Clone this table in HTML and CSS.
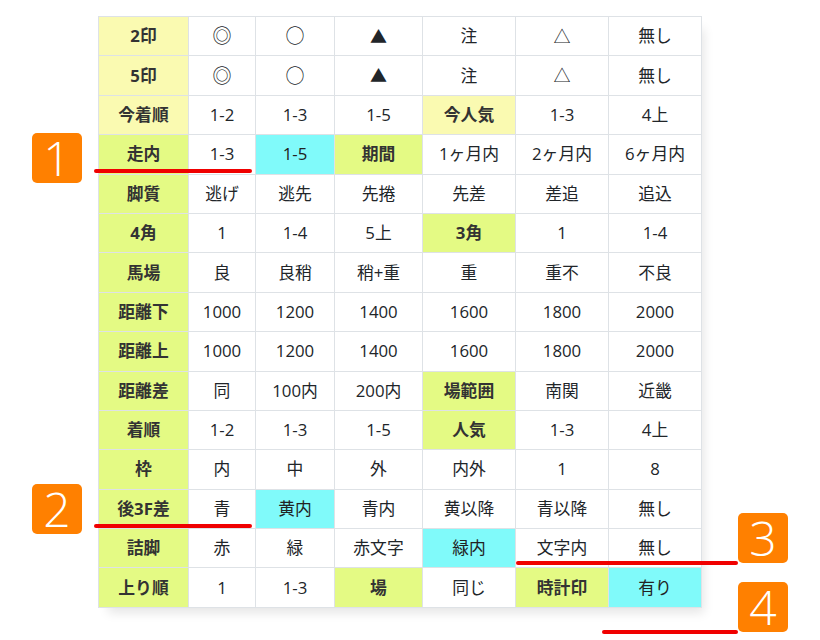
FILE: index.html
```html
<!DOCTYPE html>
<html lang="ja">
<head>
<meta charset="utf-8">
<link rel="stylesheet" href="styles.css">
</head>
<body>
<div class="page">
  <div class="wrap">
    <table class="grid">
      <colgroup>
        <col class="c0"><col class="c1"><col class="c2"><col class="c3"><col class="c4"><col class="c5"><col class="c6">
      </colgroup>
      <tr><th class="y">2印</th><td><span class="sym">◎</span></td><td><span class="sym">○</span></td><td><span class="tri">▲</span></td><td>注</td><td><span class="tri">△</span></td><td>無し</td></tr>
      <tr><th class="y">5印</th><td><span class="sym">◎</span></td><td><span class="sym">○</span></td><td><span class="tri">▲</span></td><td>注</td><td><span class="tri">△</span></td><td>無し</td></tr>
      <tr><th class="y">今着順</th><td>1-2</td><td>1-3</td><td>1-5</td><th class="y">今人気</th><td>1-3</td><td>4上</td></tr>
      <tr><th class="g">走内</th><td class="lift-r">1-3</td><td class="c">1-5</td><th class="g">期間</th><td>1ヶ月内</td><td>2ヶ月内</td><td>6ヶ月内</td></tr>
      <tr><th class="g">脚質</th><td>逃げ</td><td>逃先</td><td>先捲</td><td>先差</td><td>差追</td><td>追込</td></tr>
      <tr><th class="g">4角</th><td>1</td><td>1-4</td><td>5上</td><th class="g">3角</th><td>1</td><td>1-4</td></tr>
      <tr><th class="g">馬場</th><td>良</td><td>良稍</td><td>稍+重</td><td>重</td><td>重不</td><td>不良</td></tr>
      <tr><th class="g">距離下</th><td>1000</td><td>1200</td><td>1400</td><td>1600</td><td>1800</td><td>2000</td></tr>
      <tr><th class="g">距離上</th><td>1000</td><td>1200</td><td>1400</td><td>1600</td><td>1800</td><td>2000</td></tr>
      <tr><th class="g">距離差</th><td>同</td><td>100内</td><td>200内</td><th class="g">場範囲</th><td>南関</td><td>近畿</td></tr>
      <tr><th class="g">着順</th><td>1-2</td><td>1-3</td><td>1-5</td><th class="g">人気</th><td>1-3</td><td>4上</td></tr>
      <tr><th class="g">枠</th><td>内</td><td>中</td><td>外</td><td>内外</td><td>1</td><td>8</td></tr>
      <tr><th class="g">後3F差</th><td class="lift-r">青</td><td class="c">黄内</td><td>青内</td><td>黄以降</td><td>青以降</td><td>無し</td></tr>
      <tr><th class="g">詰脚</th><td>赤</td><td>緑</td><td class="lift-r">赤文字</td><td class="c">緑内</td><td>文字内</td><td>無し</td></tr>
      <tr><th class="g">上り順</th><td>1</td><td>1-3</td><th class="g">場</th><td>同じ</td><th class="g">時計印</th><td class="c lift-b">有り</td></tr>
    </table>
  </div>

  <div class="mark m1">1</div>
  <div class="line l1"></div>
  <div class="mark m2">2</div>
  <div class="line l2"></div>
  <div class="mark m3">3</div>
  <div class="line l3"></div>
  <div class="mark m4">4</div>
  <div class="line l4"></div>
</div>
</body>
</html>
```

FILE: styles.css
```css
html, body {
  margin: 0;
  padding: 0;
  background: #ffffff;
}
body {
  font-family: "Open Sans", "Noto Sans CJK JP", sans-serif;
  color: #212529;
}
.page {
  position: relative;
  width: 820px;
  height: 640px;
  overflow: hidden;
}
.wrap {
  padding: 16px 0 0 98px;
}
.grid {
  border-collapse: collapse;
  table-layout: fixed;
  width: 603px;
  box-shadow: 6px 9px 10px -4px rgba(0, 0, 0, 0.1);
}
.c0 { width: 90px; }
.c1 { width: 67px; }
.c2 { width: 79px; }
.c3 { width: 88px; }
.c4 { width: 93px; }
.c5 { width: 93px; }
.c6 { width: 93px; }
.grid tr {
  height: 39.4px;
}
.grid th, .grid td {
  border: 1px solid #dee2e6;
  text-align: center;
  vertical-align: middle;
  padding: 0;
  font-size: 16.8px;
  line-height: 20px;
  background: #ffffff;
}
.grid th {
  font-weight: bold;
  color: #333333;
}
.sym {
  font-family: "Noto Sans CJK JP", sans-serif;
  font-size: 19px;
}
.tri {
  font-family: "Noto Sans CJK JP", sans-serif;
  font-size: 17px;
}
.grid .y { background: #fafab1; }
.grid .g { background: #e4fa84; }
.grid .c { background: #80fafa; color: #222; }
.grid .lift-r {
  position: relative;
  box-shadow: 4px 3px 6px -2px rgba(0, 0, 0, 0.18);
}
.grid .lift-b {
  position: relative;
  box-shadow: 0 6px 10px -2px rgba(0, 0, 0, 0.25);
}
.mark {
  position: absolute;
  width: 50px;
  height: 50px;
  border-radius: 5px;
  background: #ff8000;
  color: #ffffff;
  font-family: "Open Sans", sans-serif;
  font-weight: 300;
  font-size: 48px;
  line-height: 50px;
  text-align: center;
}
.m1 { left: 32px; top: 133px; }
.m2 { left: 32px; top: 484px; }
.m3 { left: 738px; top: 513px; }
.m4 { left: 738px; top: 582px; }
.line {
  position: absolute;
  height: 4px;
  border-radius: 2px;
  background: #f00000;
}
.l1 { left: 94px; top: 169px; width: 158px; }
.l2 { left: 94px; top: 524px; width: 158px; }
.l3 { left: 516px; top: 561px; width: 222px; }
.l4 { left: 602px; top: 630px; width: 136px; }
```
